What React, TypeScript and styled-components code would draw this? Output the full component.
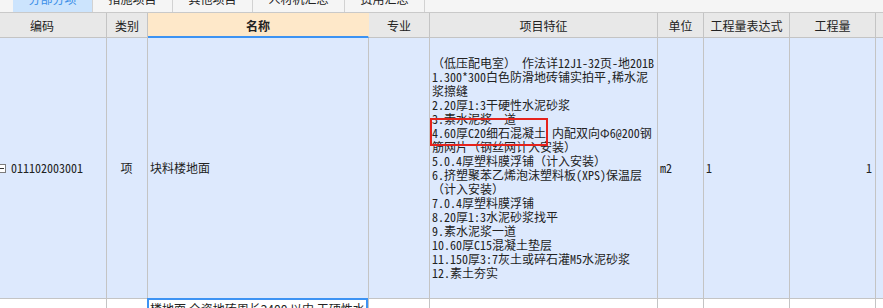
import React from "react";
import styled, { createGlobalStyle, css } from "styled-components";

const GlobalStyle = createGlobalStyle`
  html, body { margin: 0; padding: 0; background: #ffffff; overflow: hidden; }
  body { font-family: "Noto Sans CJK SC", "Noto Sans", sans-serif; color: #222; }
`;

const UI_FONT = `"Noto Sans CJK SC", "Noto Sans", sans-serif`;
const MONO_FONT = `"Noto Sans Mono CJK SC", "Noto Sans CJK SC", "Liberation Mono", monospace`;
const LINE = "#c4c4c4";
const ROW_BG = "#dde9fd";
const BLUE = "#3d93f3";

const Page = styled.div`
  width: 883px;
  height: 308px;
  overflow: hidden;
  position: relative;
`;

const TabBar = styled.div`
  display: flex;
  height: 26px;
  margin-top: -14px;
  padding-left: 13px;
  background: #f5f5f5;
  border-bottom: 1px solid #c9c9c9;
`;

const Tab = styled.div<{ $active?: boolean }>`
  padding: 0 15.5px;
  line-height: 26px;
  font-family: ${UI_FONT};
  font-size: 12px;
  white-space: nowrap;
  border-right: 1px solid #d2d2d2;
  color: #222;
  ${(p) =>
    p.$active &&
    css`
      background: #cce4fd;
      color: #3a8ee8;
    `}
`;

const Grid = styled.div`
  display: grid;
  margin-left: -22px;
  grid-template-columns: 129px 41px 221px 61px 228px 46px 86px 86px 100px;
  grid-template-rows: 25px 261px 40px;
`;

const HeadCell = styled.div<{ $sorted?: boolean }>`
  box-sizing: border-box;
  display: flex;
  align-items: center;
  justify-content: center;
  font-family: ${UI_FONT};
  font-size: 12px;
  color: #222;
  background: #e8e8e8;
  border-right: 1px solid ${LINE};
  border-bottom: 1px solid ${LINE};
  white-space: nowrap;
  ${(p) =>
    p.$sorted &&
    css`
      background: #fee8c9;
      font-weight: 700;
      border-right-color: #fee8c9;
      border-bottom: 2px solid ${BLUE};
      padding-top: 1px;
    `}
`;

type Align = "left" | "center" | "right";

const Cell = styled.div<{ $align?: Align; $bg?: string; $mono?: boolean; $top?: boolean }>`
  box-sizing: border-box;
  position: relative;
  display: flex;
  align-items: ${(p) => (p.$top ? "flex-start" : "center")};
  justify-content: ${(p) =>
    p.$align === "center" ? "center" : p.$align === "right" ? "flex-end" : "flex-start"};
  padding: 0 3px 0 2px;
  background: ${(p) => p.$bg ?? "#ffffff"};
  border-right: 1px solid ${LINE};
  border-bottom: 1px solid ${LINE};
  font-family: ${(p) => (p.$mono ? MONO_FONT : UI_FONT)};
  font-size: 12px;
  line-height: 14px;
  color: #222;
  white-space: nowrap;
  overflow: hidden;
`;

const CodeCell = styled(Cell)`
  padding-left: 19px;
  gap: 5px;
  overflow: visible;
`;

const ExpandBox = styled.span`
  box-sizing: border-box;
  position: relative;
  flex: none;
  width: 9px;
  height: 9px;
  border: 1px solid #7c7c7c;
  background: #ffffff;
  &::after {
    content: "";
    position: absolute;
    left: 1px;
    right: 1px;
    top: 3px;
    height: 1px;
    background: #333;
  }
`;

const Features = styled.div`
  display: flex;
  flex-direction: column;
  font-family: ${MONO_FONT};
  font-size: 12px;
  line-height: 14px;
  color: #222;
`;

const FeatureLine = styled.div`
  white-space: pre;
  height: 14px;
`;

const Marked = styled.span`
  position: relative;
  &::after {
    content: "";
    position: absolute;
    left: -2px;
    right: -2px;
    top: -6px;
    bottom: -5px;
    border: 2px solid #e5231d;
    pointer-events: none;
  }
`;

const SelectedCell = styled(Cell)`
  overflow: visible;
  padding-top: 2px;
  &::after {
    content: "";
    position: absolute;
    left: -1px;
    right: 0;
    top: -1px;
    bottom: 0;
    border: 2px solid ${BLUE};
    border-bottom: none;
    pointer-events: none;
  }
`;

const CellText = styled.span`
  display: block;
  overflow: hidden;
  white-space: normal;
  line-height: 14px;
  padding-top: 1px;
`;

const tabs = ["分部分项", "措施项目", "其他项目", "人材机汇总", "费用汇总"];

const headers = ["编码", "类别", "名称", "专业", "项目特征", "单位", "工程量表达式", "工程量", ""];

const featureLines: React.ReactNode[] = [
  "（低压配电室） 作法详12J1-32页-地201B",
  "1.300*300白色防滑地砖铺实拍平,稀水泥",
  "浆擦缝",
  "2.20厚1:3干硬性水泥砂浆",
  "3.素水泥浆一道",
  <>
    <Marked>4.60厚C20细石混凝土</Marked> 内配双向Φ6@200钢
  </>,
  "筋网片（钢丝网计入安装）",
  "5.0.4厚塑料膜浮铺（计入安装）",
  "6.挤塑聚苯乙烯泡沫塑料板(XPS)保温层",
  "（计入安装）",
  "7.0.4厚塑料膜浮铺",
  "8.20厚1:3水泥砂浆找平",
  "9.素水泥浆一道",
  "10.60厚C15混凝土垫层",
  "11.150厚3:7灰土或碎石灌M5水泥砂浆",
  "12.素土夯实",
];

export default function App() {
  return (
    <Page>
      <GlobalStyle />
      <TabBar>
        {tabs.map((t, i) => (
          <Tab key={t} $active={i === 0}>
            {t}
          </Tab>
        ))}
      </TabBar>
      <Grid>
        {headers.map((h, i) => (
          <HeadCell key={i} $sorted={h === "名称"}>
            {h}
          </HeadCell>
        ))}

        <CodeCell $bg={ROW_BG} $mono>
          <ExpandBox />
          011102003001
        </CodeCell>
        <Cell $bg={ROW_BG} $align="center">项</Cell>
        <Cell $bg={ROW_BG}>块料楼地面</Cell>
        <Cell $bg={ROW_BG} />
        <Cell $bg={ROW_BG}>
          <Features>
            {featureLines.map((l, i) => (
              <FeatureLine key={i}>{l}</FeatureLine>
            ))}
          </Features>
        </Cell>
        <Cell $bg={ROW_BG} $mono>m2</Cell>
        <Cell $bg={ROW_BG} $mono>1</Cell>
        <Cell $bg={ROW_BG} $mono $align="right">1</Cell>
        <Cell $bg={ROW_BG} />

        <Cell />
        <Cell />
        <SelectedCell $top>
          <CellText>楼地面 全瓷地砖周长2400 以内 干硬性水泥砂浆粘贴</CellText>
        </SelectedCell>
        <Cell />
        <Cell />
        <Cell />
        <Cell />
        <Cell />
        <Cell />
      </Grid>
    </Page>
  );
}
